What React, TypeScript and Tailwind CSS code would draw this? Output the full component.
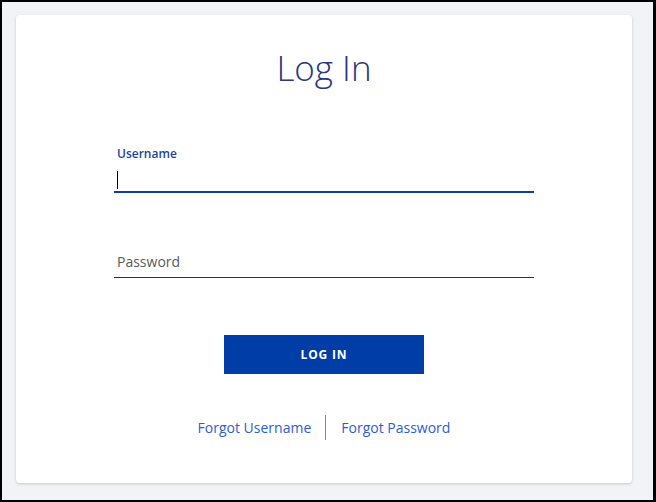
export default function App() {
  return (
    <div className="w-[656px] h-[502px] border-2 border-r-[3px] border-black bg-[#f2f3f7] pl-[14px] pt-[13px] font-['Open_Sans',sans-serif]">
      {/* Login card */}
      <div className="w-[616px] h-[468px] rounded bg-white shadow-[0_1px_3px_rgba(0,0,0,0.18)] flex flex-col items-center">
        <h1 className="mt-[32px] text-[35px] leading-[42px] font-light text-[#2a3778]">Log In</h1>

        <form className="mt-[57px] w-[420px] flex flex-col" onSubmit={(e) => e.preventDefault()}>
          {/* Username field (focused) */}
          <label className="pl-[3px] text-[12px] leading-[16px] font-semibold text-[#1c44a0]">Username</label>
          <div className="mt-[3px] h-[28px] border-b-2 border-[#0a3ea8] pl-[3px] pb-[2px] flex items-end">
            <span className="w-px h-[18px] bg-black" />
          </div>

          {/* Password field */}
          <div className="mt-[59px] h-[26px] border-b border-[#333] pl-[3px] text-[14px] leading-[20px] text-[#5a5a5a]">
            Password
          </div>

          <button
            type="submit"
            className="mt-[57px] self-center w-[200px] h-[39px] bg-[#003da6] text-white text-[12px] font-bold tracking-[0.07em]"
          >
            LOG IN
          </button>
        </form>

        {/* Recovery links */}
        <div className="mt-[41px] flex items-center text-[14px] leading-[20px] text-[#2f5bd9]">
          <a href="#" className="pr-[14px]">Forgot Username</a>
          <span className="w-px h-[25px] bg-[#888]" />
          <a href="#" className="pl-[15px]">Forgot Password</a>
        </div>
      </div>
    </div>
  );
}
